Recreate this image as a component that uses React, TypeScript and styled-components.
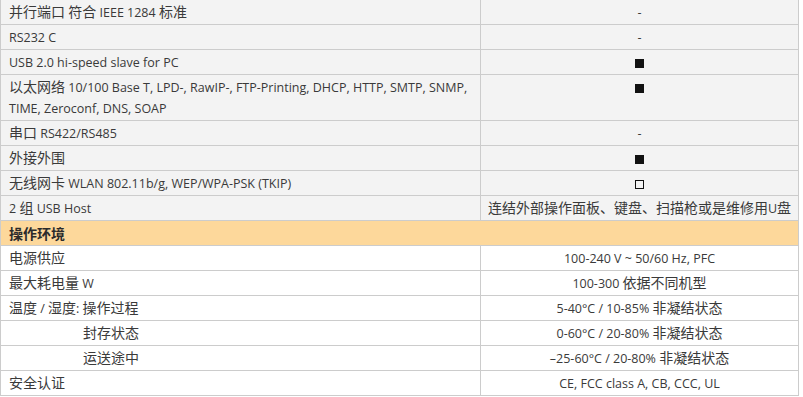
import React from 'react';
import styled, { createGlobalStyle } from 'styled-components';

const GlobalStyle = createGlobalStyle`
  body {
    margin: 0;
    background: #ffffff;
    font-family: "Open Sans", "Noto Sans CJK SC", sans-serif;
    color: #3a3a3a;
  }
`;

const lineColor = '#cccccc';

const Sheet = styled.div`
  width: 799px;
  box-sizing: border-box;
  border-left: 1px solid ${lineColor};
  border-right: 1px solid ${lineColor};
`;

const Row = styled.div<{ $tone: 'grey' | 'white' }>`
  display: grid;
  grid-template-columns: 479px 1fr;
  background: ${(p) => (p.$tone === 'grey' ? '#f3f3f3' : '#ffffff')};
  border-bottom: 1px solid ${lineColor};
`;

const Cell = styled.div<{ $indent?: boolean }>`
  padding: 2px 8px 1px ${(p) => (p.$indent ? '82px' : '8px')};
  font-size: 12.5px;
  line-height: 21px;
  min-height: 21px;
`;

const ValueCell = styled(Cell)`
  border-left: 1px solid ${lineColor};
  text-align: center;
  padding-left: 4px;
  padding-right: 4px;
`;

const SectionRow = styled.div`
  background: #fdd89b;
  border-bottom: 1px solid ${lineColor};
  padding: 2px 8px 1px;
  height: 21px;
  line-height: 21px;
  font-family: "Noto Sans CJK SC", sans-serif;
  font-size: 14px;
  font-weight: 700;
  color: #2b2b2b;
`;

const Zh = styled.span`
  display: inline-block;
  font-family: "Noto Sans CJK SC", sans-serif;
  font-size: 14px;
  line-height: 14px;
`;

const Mark = styled.span<{ $filled: boolean }>`
  display: inline-block;
  width: 9px;
  height: 9px;
  box-sizing: border-box;
  border: 1px solid #111;
  background: ${(p) => (p.$filled ? '#111' : 'transparent')};
  vertical-align: -1px;
`;

const cjk = /[\u3000-\u303f\u4e00-\u9fff\uff00-\uffef]/;

const Mixed: React.FC<{ text: string }> = ({ text }) => {
  const parts = text.split(/([\u3000-\u303f\u4e00-\u9fff\uff00-\uffef]+)/).filter(Boolean);
  return (
    <>
      {parts.map((p, i) => (cjk.test(p) ? <Zh key={i}>{p}</Zh> : <span key={i}>{p}</span>))}
    </>
  );
};

type Value = string | 'full' | 'empty';

const upper: [string, Value][] = [
  ['并行端口 符合 IEEE 1284 标准', '-'],
  ['RS232 C', '-'],
  ['USB 2.0 hi-speed slave for PC', 'full'],
  ['以太网络 10/100 Base T, LPD-, RawIP-, FTP-Printing, DHCP, HTTP, SMTP, SNMP, TIME, Zeroconf, DNS, SOAP', 'full'],
  ['串口 RS422/RS485', '-'],
  ['外接外围', 'full'],
  ['无线网卡 WLAN 802.11b/g, WEP/WPA-PSK (TKIP)', 'empty'],
  ['2 组 USB Host', '连结外部操作面板、键盘、扫描枪或是维修用U盘'],
];

const lower: [string, string, boolean?][] = [
  ['电源供应', '100-240 V ~ 50/60 Hz, PFC'],
  ['最大耗电量 W', '100-300 依据不同机型'],
  ['温度 / 湿度: 操作过程', '5-40°C / 10-85% 非凝结状态'],
  ['封存状态', '0-60°C / 20-80% 非凝结状态', true],
  ['运送途中', '–25-60°C / 20-80% 非凝结状态', true],
  ['安全认证', 'CE, FCC class A, CB, CCC, UL'],
];

const renderValue = (v: Value) => {
  if (v === 'full') return <Mark $filled />;
  if (v === 'empty') return <Mark $filled={false} />;
  return <Mixed text={v} />;
};

export default function App() {
  return (
    <>
      <GlobalStyle />
      <Sheet>
        {upper.map(([label, value]) => (
          <Row key={label} $tone="grey">
            <Cell>
              <Mixed text={label} />
            </Cell>
            <ValueCell>{renderValue(value)}</ValueCell>
          </Row>
        ))}
        <SectionRow>操作环境</SectionRow>
        {lower.map(([label, value, indent]) => (
          <Row key={label} $tone="white">
            <Cell $indent={indent}>
              <Mixed text={label} />
            </Cell>
            <ValueCell>
              <Mixed text={value} />
            </ValueCell>
          </Row>
        ))}
      </Sheet>
    </>
  );
}
